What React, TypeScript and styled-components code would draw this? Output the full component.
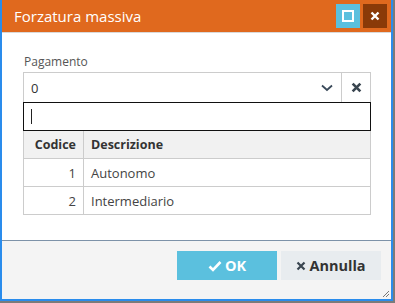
import React from "react";
import styled, { createGlobalStyle } from "styled-components";

const GlobalStyle = createGlobalStyle`
  html, body {
    margin: 0;
    padding: 0;
    background: #7b7b7b;
  }
  body {
    font-family: "Open Sans", "Noto Sans", sans-serif;
  }
`;

const Window = styled.div`
  width: 389px;
  height: 299px;
  border: 2px solid #2a8cec;
  border-top: none;
  background: #fff;
  display: flex;
  flex-direction: column;
  position: relative;
  box-sizing: content-box;
`;

const TitleBar = styled.div`
  height: 32px;
  background: #e0691e;
  border-bottom: 1px solid #d9d9d9;
  display: flex;
  align-items: center;
  padding: 0 4px 0 12px;
`;

const Title = styled.div`
  flex: 1;
  color: #fff;
  font-size: 15px;
`;

const TitleButton = styled.div<{ $bg: string }>`
  width: 24px;
  height: 24px;
  margin-left: 3px;
  background: ${(p) => p.$bg};
  display: flex;
  align-items: center;
  justify-content: center;
`;

const Body = styled.div`
  flex: 1;
  padding: 20px 20px 0 21px;
`;

const Label = styled.div`
  font-size: 12px;
  color: #555;
  margin-bottom: 2px;
  padding-left: 1px;
`;

const SelectBox = styled.div`
  height: 29px;
  border: 1px solid #ccc;
  border-bottom: none;
  display: flex;
  align-items: center;
`;

const SelectValue = styled.div`
  flex: 1;
  padding-left: 7px;
  font-size: 13px;
  color: #333;
`;

const Chevron = styled.div`
  width: 28px;
  display: flex;
  align-items: center;
  justify-content: center;
`;

const ClearButton = styled.div`
  width: 28px;
  height: 100%;
  border-left: 1px solid #ccc;
  display: flex;
  align-items: center;
  justify-content: center;
`;

const SearchInput = styled.div`
  height: 27px;
  border: 1px solid #111;
  display: flex;
  align-items: center;
  padding-left: 7px;
`;

const Caret = styled.div`
  width: 1px;
  height: 15px;
  background: #222;
`;

const Table = styled.table`
  width: 100%;
  border-collapse: collapse;
  font-size: 13px;
  color: #444;
`;

const Th = styled.th<{ $right?: boolean }>`
  height: 27px;
  background: #f1f1f1;
  border: 1px solid #ccc;
  border-top: none;
  font-weight: 700;
  font-size: 12.5px;
  color: #333;
  text-align: ${(p) => (p.$right ? "right" : "left")};
  padding: 0 7px;
`;

const Td = styled.td<{ $right?: boolean }>`
  height: 27px;
  border: 1px solid #ccc;
  text-align: ${(p) => (p.$right ? "right" : "left")};
  padding: 0 7px;
`;

const Footer = styled.div`
  height: 48px;
  background: #f4f4f4;
  border-top: 1px solid #7d92a8;
  display: flex;
  justify-content: flex-end;
  align-items: flex-start;
  padding: 10px 10px 0 0;
  gap: 4px;
`;

const Button = styled.div<{ $primary?: boolean }>`
  width: 100px;
  height: 29px;
  background: ${(p) => (p.$primary ? "#5bc0de" : "#e8ecef")};
  color: ${(p) => (p.$primary ? "#fff" : "#333")};
  font-weight: 700;
  font-size: 14.5px;
  display: flex;
  align-items: center;
  justify-content: center;
  gap: 3px;
`;

const Grip = styled.svg`
  position: absolute;
  right: 1px;
  bottom: 1px;
`;

const rows = [
  { code: 1, desc: "Autonomo" },
  { code: 2, desc: "Intermediario" },
];

export default function App() {
  return (
    <>
      <GlobalStyle />
      <Window>
        <TitleBar>
          <Title>Forzatura massiva</Title>
          <TitleButton $bg="#5bc0de">
            <svg width="12" height="12" viewBox="0 0 12 12">
              <rect x="1" y="1" width="10" height="10" fill="none" stroke="#fff" strokeWidth="2" />
            </svg>
          </TitleButton>
          <TitleButton $bg="#8a3a08">
            <svg width="10" height="10" viewBox="0 0 10 10">
              <path d="M1.5 1.5 L8.5 8.5 M8.5 1.5 L1.5 8.5" stroke="#fff" strokeWidth="2.4" />
            </svg>
          </TitleButton>
        </TitleBar>
        <Body>
          <Label>Pagamento</Label>
          <SelectBox>
            <SelectValue>0</SelectValue>
            <Chevron>
              <svg width="12" height="8" viewBox="0 0 12 8">
                <path d="M1 1.5 L6 6 L11 1.5" fill="none" stroke="#3a4a5a" strokeWidth="1.8" />
              </svg>
            </Chevron>
            <ClearButton>
              <svg width="11" height="11" viewBox="0 0 10 10">
                <path d="M1.5 1.5 L8.5 8.5 M8.5 1.5 L1.5 8.5" stroke="#3a4650" strokeWidth="2.4" />
              </svg>
            </ClearButton>
          </SelectBox>
          <SearchInput>
            <Caret />
          </SearchInput>
          <Table>
            <thead>
              <tr>
                <Th $right style={{ width: "45px" }}>Codice</Th>
                <Th>Descrizione</Th>
              </tr>
            </thead>
            <tbody>
              {rows.map((r) => (
                <tr key={r.code}>
                  <Td $right>{r.code}</Td>
                  <Td>{r.desc}</Td>
                </tr>
              ))}
            </tbody>
          </Table>
        </Body>
        <Footer>
          <Button $primary>
            <svg width="14" height="12" viewBox="0 0 14 12">
              <path d="M1.5 6.5 L5 10 L12.5 2" fill="none" stroke="#fff" strokeWidth="2.6" />
            </svg>
            OK
          </Button>
          <Button>
            <svg width="10" height="10" viewBox="0 0 10 10">
              <path d="M1.5 1.5 L8.5 8.5 M8.5 1.5 L1.5 8.5" stroke="#3a4650" strokeWidth="2.2" />
            </svg>
            Annulla
          </Button>
        </Footer>
        <Grip width="8" height="8" viewBox="0 0 8 8">
          <path d="M7 1 L1 7 M7 4 L4 7" stroke="#777" strokeWidth="1" />
        </Grip>
      </Window>
    </>
  );
}
